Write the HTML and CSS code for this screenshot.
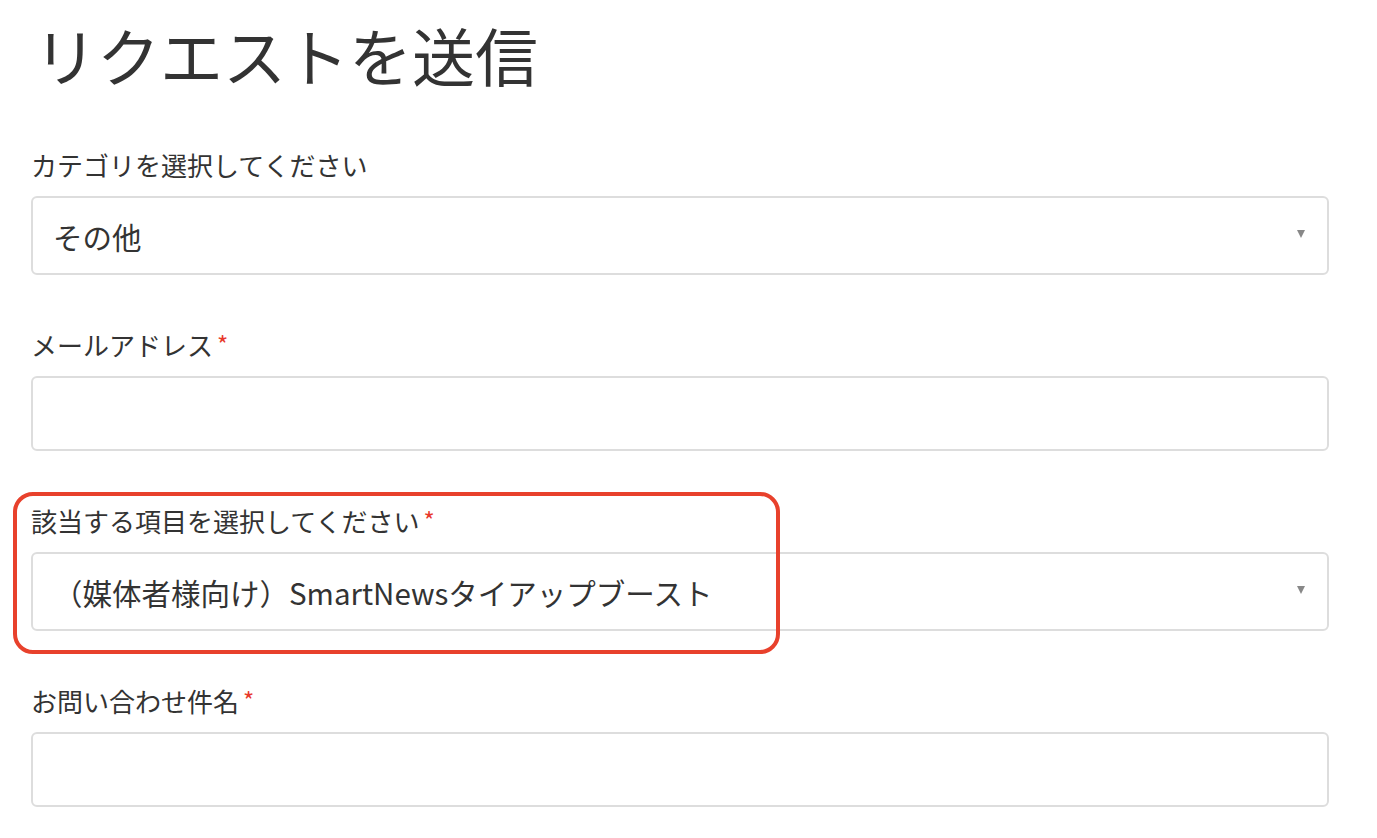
FILE: index.html
```html
<!DOCTYPE html>
<html lang="ja">
<head>
  <meta charset="UTF-8" />
  <meta name="viewport" content="width=device-width, initial-scale=1.0" />
  <title>リクエストを送信</title>
  <link rel="stylesheet" href="styles.css">
</head>
<body>

<div class="page">
  <h1>リクエストを送信</h1>

  <form class="request-form">
    <div class="field">
      <label for="category">カテゴリを選択してください</label>
      <div class="select-wrap">
        <select id="category">
          <option>その他</option>
        </select>
      </div>
    </div>

    <div class="field">
      <label for="email">メールアドレス<span class="req">*</span></label>
      <input type="email" id="email" class="text-input">
    </div>

    <div class="field highlighted">
      <div class="highlight-box"></div>
      <label for="item">該当する項目を選択してください<span class="req">*</span></label>
      <div class="select-wrap">
        <select id="item">
          <option>（媒体者様向け）SmartNewsタイアップブースト</option>
        </select>
      </div>
    </div>

    <div class="field">
      <label for="subject">お問い合わせ件名<span class="req">*</span></label>
      <input type="text" id="subject" class="text-input">
    </div>
  </form>
</div>

</body>
</html>
```

FILE: styles.css
```css
body {
  margin: 0;
  padding: 16px 0 0;
  background: #fff;
  color: #333;
  font-family: "Noto Sans CJK JP", "Noto Sans", sans-serif;
}
.page {
  width: 1298px;
  margin-left: 31px;
}
h1 {
  margin: 0 0 57px 3px;
  font-size: 63px;
  font-weight: 400;
  line-height: 76px;
  color: #333;
}
.field {
  position: relative;
  margin-bottom: 54px;
}
.field label {
  display: block;
  font-size: 26px;
  line-height: 32px;
  margin-bottom: 15px;
  color: #333;
}
.req {
  color: #e8382b;
  font-size: 24px;
  line-height: 0;
  margin-left: 4px;
  vertical-align: 2px;
}
.select-wrap {
  position: relative;
}
.select-wrap::after {
  content: "";
  position: absolute;
  right: 24px;
  top: 34px;
  border-left: 4.5px solid transparent;
  border-right: 4.5px solid transparent;
  border-top: 8px solid #888;
}
select, .text-input {
  display: block;
  box-sizing: border-box;
  width: 100%;
  margin: 0;
  border: 2px solid #ddd;
  border-radius: 6px;
  background: #fff;
  color: #333;
  font-family: inherit;
  outline: none;
}
select {
  appearance: none;
  height: 79px;
  padding: 0 50px 0 20px;
  font-size: 29.5px;
}
.text-input {
  height: 75px;
  padding: 0 20px;
  font-size: 26px;
}
.highlight-box {
  position: absolute;
  left: -18px;
  top: -13px;
  width: 767px;
  height: 162px;
  box-sizing: border-box;
  border: 4px solid #e8412c;
  border-radius: 20px;
  pointer-events: none;
  z-index: 2;
}
```
